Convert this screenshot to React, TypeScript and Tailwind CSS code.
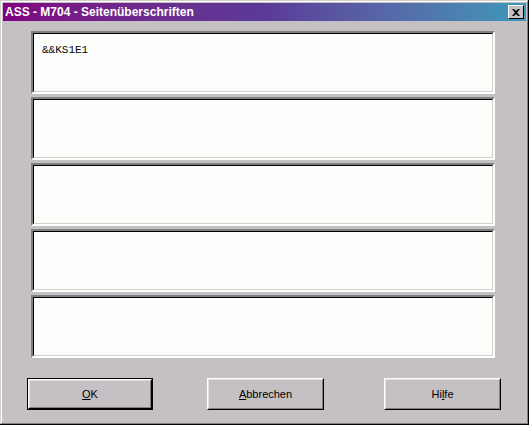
import React from 'react';

const ui = { fontFamily: '"Liberation Sans", Arial, sans-serif' };

function Field({ text }: { text?: string }) {
  return (
    <div className="h-[63px] border-2 border-t-[#808080] border-l-[#808080] border-b-white border-r-white">
      <div className="h-full border border-t-black border-l-black border-b-[#d4d0c8] border-r-[#d4d0c8] bg-[#fcfefc] pl-[8px] pt-[2px]">
        {text && (
          <span
            className="text-[11px] leading-[13px] text-black"
            style={{ fontFamily: '"Liberation Mono", "Courier New", monospace' }}
          >
            {text}
          </span>
        )}
      </div>
    </div>
  );
}

function Btn({ children, primary, width }: { children: React.ReactNode; primary?: boolean; width: string }) {
  const inner = (
    <div className="h-full border border-t-white border-l-white border-b-black border-r-black">
      <div className="h-full flex items-center justify-center border border-t-[#e0e0e0] border-l-[#e0e0e0] border-b-[#808080] border-r-[#808080] text-[11px] text-black">
        {children}
      </div>
    </div>
  );
  return (
    <div className={`${width} h-[32px] ${primary ? 'border border-black' : ''}`}>{inner}</div>
  );
}

export default function App() {
  return (
    <div
      className="w-[529px] h-[425px] bg-[#c4c0c4] p-[3px] flex flex-col"
      style={{
        ...ui,
        boxShadow:
          'inset -1px -1px #000, inset 1px 1px #d4d0c8, inset -2px -2px #808080, inset 2px 2px #fff',
      }}
    >
      <div className="h-[18px] flex items-center justify-between bg-gradient-to-r from-[#800080] via-[#5a3a98] to-[#3a98b8] pl-[2px] pr-[2px]">
        <span className="text-[12px] font-bold text-white leading-none">ASS - M704 - Seitenüberschriften</span>
        <div className="w-[16px] h-[14px] bg-[#c4c0c4] border border-t-white border-l-white border-b-black border-r-black flex items-center justify-center">
          <svg width="8" height="7" viewBox="0 0 8 7">
            <path d="M0 0h2l2 2 2-2h2L5 3.5 8 7H6L4 5 2 7H0l3-3.5z" fill="#000" />
          </svg>
        </div>
      </div>

      <div className="flex flex-col gap-[3px] mt-[10px] ml-[28px] w-[464px]">
        <Field text="&&KS1E1" />
        <Field />
        <Field />
        <Field />
        <Field />
      </div>

      <div className="flex mt-[20px]">
        <div className="ml-[24px]">
          <Btn primary width="w-[126px]">
            <span><u>O</u>K</span>
          </Btn>
        </div>
        <div className="ml-[54px]">
          <Btn width="w-[117px]">
            <span><u>A</u>bbrechen</span>
          </Btn>
        </div>
        <div className="ml-[60px]">
          <Btn width="w-[117px]">
            <span>Hi<u>l</u>fe</span>
          </Btn>
        </div>
      </div>
    </div>
  );
}
